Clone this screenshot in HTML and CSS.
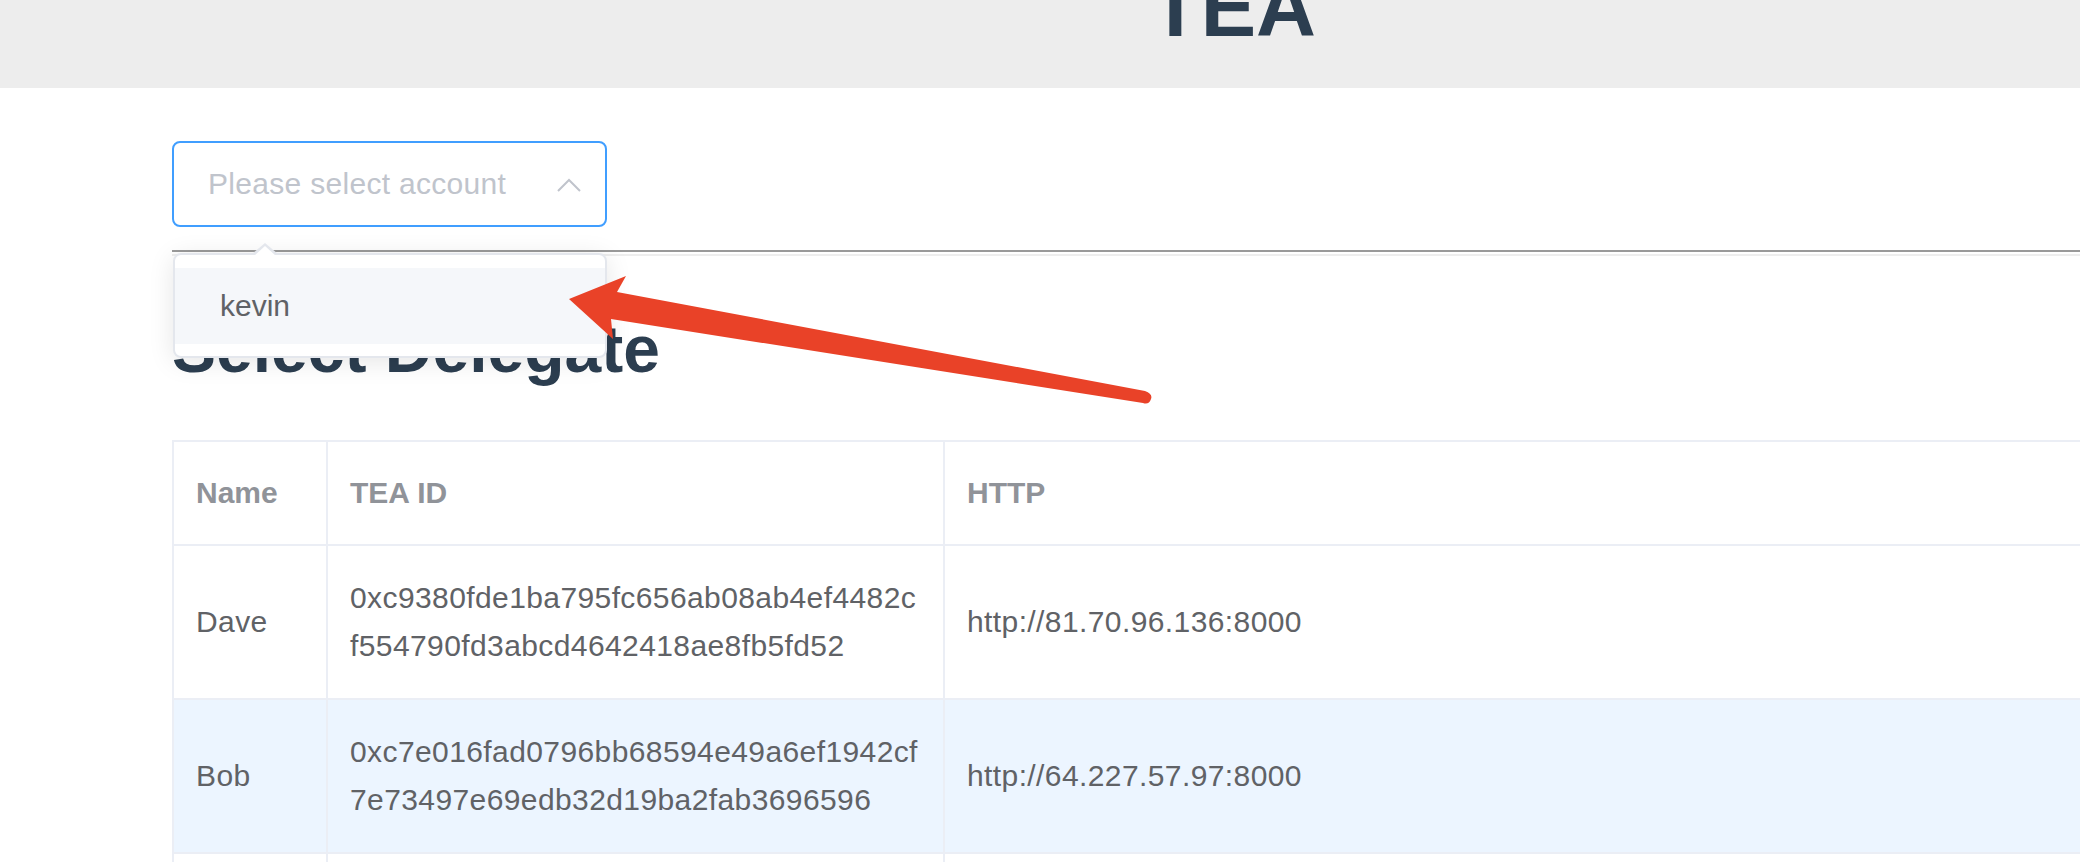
FILE: index.html
```html
<!DOCTYPE html>
<html lang="en">
<head>
<meta charset="utf-8">
<title>TEA</title>
<link rel="stylesheet" href="styles.css">
</head>
<body>
<header class="topbar">
  <h1 class="brand">TEA</h1>
</header>
<main class="content">
  <div class="select">
    <span class="placeholder">Please select account</span>
    <svg class="chev" viewBox="0 0 24 14" aria-hidden="true"><polyline points="1,13 12,2 23,13" fill="none" stroke="#c0c4cc" stroke-width="2"/></svg>
    <div class="popper">
      <div class="option">kevin</div>
    </div>
  </div>
  <div class="divider"></div>
  <h2 class="section-title">Select Delegate</h2>
  <table class="grid">
    <thead>
      <tr class="head-row">
        <th class="c-name">Name</th>
        <th class="c-id">TEA ID</th>
        <th class="c-http">HTTP</th>
      </tr>
    </thead>
    <tbody>
      <tr class="body-row">
        <td>Dave</td>
        <td><span class="line">0xc9380fde1ba795fc656ab08ab4ef4482c</span><span class="line">f554790fd3abcd4642418ae8fb5fd52</span></td>
        <td>http://81.70.96.136:8000</td>
      </tr>
      <tr class="body-row current">
        <td>Bob</td>
        <td><span class="line">0xc7e016fad0796bb68594e49a6ef1942cf</span><span class="line">7e73497e69edb32d19ba2fab3696596</span></td>
        <td>http://64.227.57.97:8000</td>
      </tr>
      <tr class="body-row">
        <td></td>
        <td></td>
        <td></td>
      </tr>
    </tbody>
  </table>
</main>
<svg class="annotation" viewBox="0 0 2080 862" aria-hidden="true">
  <path d="M569 299 L626 276 L617 292 L1145 391 Q1153 394 1151 399 Q1149 405 1143 403 L611 319 L613 339 Z" fill="#e94228"/>
</svg>
</body>
</html>
```
FILE: styles.css
```css
html, body {
  margin: 0;
  overflow: hidden;
}
body {
  position: relative;
  width: 2080px;
  height: 862px;
  font-family: "Liberation Sans", Arial, sans-serif;
  background: #fff;
}
.topbar {
  width: 2466px;
  height: 88px;
  background: #ededed;
  overflow: hidden;
}
.brand {
  margin: -33px 0 0;
  font-size: 83px;
  line-height: 82px;
  font-weight: bold;
  color: #2c3e50;
  text-align: center;
}
.content {
  width: 2122px;
  padding: 53px 0 0 172px;
}
.select {
  position: relative;
  width: 435px;
  height: 86px;
  box-sizing: border-box;
  border: 2px solid #409eff;
  border-radius: 8px;
  display: flex;
  align-items: center;
  justify-content: space-between;
  padding: 0 24px 0 34px;
}
.placeholder {
  font-size: 30px;
  letter-spacing: 0.3px;
  color: #c0c4cc;
}
.chev {
  width: 24px;
  height: 14px;
  margin-top: 2px;
}
.popper {
  position: absolute;
  top: 110px;
  left: -1px;
  width: 434px;
  box-sizing: border-box;
  border: 2px solid #e4e7ed;
  border-radius: 8px;
  background: #fff;
  box-shadow: 0 4px 26px rgba(0, 0, 0, 0.1);
  padding: 13px 0 12px;
  z-index: 3;
}
.popper::before,
.popper::after {
  content: "";
  position: absolute;
  width: 0;
  height: 0;
}
.popper::before {
  top: -12px;
  left: 77px;
  border-left: 13px solid transparent;
  border-right: 13px solid transparent;
  border-bottom: 11px solid #e4e7ed;
}
.popper::after {
  top: -9px;
  left: 79px;
  border-left: 11px solid transparent;
  border-right: 11px solid transparent;
  border-bottom: 10px solid #fff;
}
.option {
  height: 76px;
  padding: 0 45px;
  display: flex;
  align-items: center;
  background: #f5f7fa;
  font-size: 30px;
  color: #606266;
}
.divider {
  margin-top: 23px;
  height: 2px;
  border-top: 2px solid #9a9a9a;
  border-bottom: 2px solid #eeeeee;
}
.section-title {
  margin: 55px 0 53px;
  font-size: 66px;
  line-height: 76px;
  font-weight: bold;
  color: #2c3e50;
}
.grid {
  width: 2122px;
  table-layout: fixed;
  border-collapse: separate;
  border-spacing: 0;
  border-top: 2px solid #ebeef5;
  border-left: 2px solid #ebeef5;
  font-size: 30px;
  line-height: 48px;
}
.grid th,
.grid td {
  box-sizing: border-box;
  border-right: 2px solid #ebeef5;
  border-bottom: 2px solid #ebeef5;
  padding: 0 22px;
  text-align: left;
  vertical-align: middle;
  white-space: nowrap;
}
.grid th {
  color: #909399;
  font-weight: bold;
  height: 104px;
}
.grid td {
  color: #606266;
  height: 154px;
  letter-spacing: 0.4px;
}
.c-name {
  width: 154px;
}
.c-id {
  width: 617px;
}
.body-row.current td {
  background: #ecf5ff;
}
.line {
  display: block;
}
.annotation {
  position: absolute;
  top: 0;
  left: 0;
  width: 2080px;
  height: 862px;
  pointer-events: none;
  z-index: 5;
}
```
